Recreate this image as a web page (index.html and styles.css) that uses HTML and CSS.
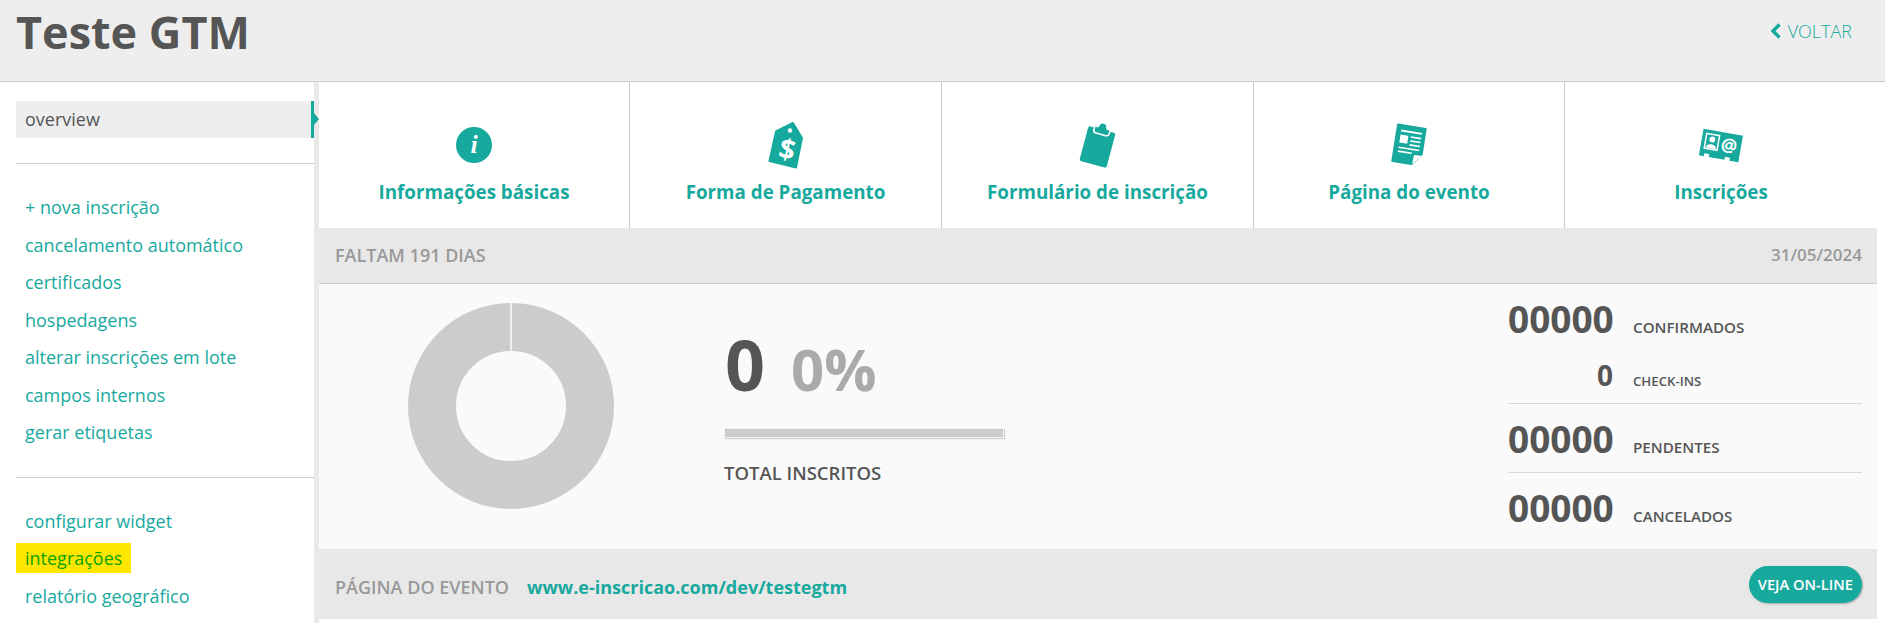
FILE: index.html
```html
<!DOCTYPE html>
<html lang="pt-br">
<head>
  <meta charset="UTF-8">
  <meta name="viewport" content="width=device-width, initial-scale=1.0">
  <title>Teste GTM</title>
  <link rel="stylesheet" href="styles.css">
</head>
<body>

<header class="top">
  <h1>Teste GTM</h1>
  <a class="back" href="#">
    <svg width="12" height="16" viewBox="0 0 12 16"><path d="M9.5 1.5 3 8l6.500 6.500" fill="none" stroke="#17a99e" stroke-width="3.400"/></svg>
    VOLTAR
  </a>
</header>

<div class="layout">
  <aside class="sidebar">
    <div class="current">overview</div>
    <hr>
    <nav class="links">
      <a href="#">+ nova inscrição</a>
      <a href="#">cancelamento automático</a>
      <a href="#">certificados</a>
      <a href="#">hospedagens</a>
      <a href="#">alterar inscrições em lote</a>
      <a href="#">campos internos</a>
      <a href="#">gerar etiquetas</a>
    </nav>
    <hr>
    <nav class="links">
      <a href="#">configurar widget</a>
      <a href="#"><span class="marked">integrações</span></a>
      <a href="#">relatório geográfico</a>
    </nav>
  </aside>

  <main class="content">
    <div class="tabs">
      <a class="tab" href="#">
        <svg class="icon" width="36" height="36" viewBox="0 0 36 36">
          <circle cx="18" cy="18" r="18" fill="#17a99e"/>
          <text x="18" y="26" text-anchor="middle" class="icon-i">i</text>
        </svg>
        <span>Informações básicas</span>
      </a>
      <a class="tab" href="#">
        <svg class="icon" width="36" height="48" viewBox="0 0 36 48">
          <path d="M25 2 8 10.500 1.500 40 28 46.500 34 17Z" fill="#17a99e" stroke="#17a99e" stroke-width="2" stroke-linejoin="round"/>
          <circle cx="22" cy="9.500" r="2.200" fill="#fff"/>
          <text x="0" y="0" transform="translate(17 38) rotate(13)" text-anchor="middle" class="icon-dollar">$</text>
        </svg>
        <span>Forma de Pagamento</span>
      </a>
      <a class="tab" href="#">
        <svg class="icon" width="38" height="46" viewBox="0 0 38 46">
          <g transform="rotate(15 19 23)">
            <rect x="5" y="7" width="28" height="36" rx="2" fill="#17a99e"/>
            <circle cx="19" cy="4.500" r="3.500" fill="#17a99e"/>
            <path d="M11 6v3q0 3 3 3h10q3 0 3-3V6" fill="#17a99e" stroke="#fff" stroke-width="1.500"/>
            <rect x="15" y="4.500" width="8" height="4" fill="#17a99e"/>
          </g>
        </svg>
        <span>Formulário de inscrição</span>
      </a>
      <a class="tab" href="#">
        <svg class="icon" width="38" height="44" viewBox="0 0 38 44">
          <g transform="rotate(9 19 22)">
            <path d="M5 3.500h28v26L24.500 40.500H5Z" fill="#17a99e" stroke="#17a99e" stroke-width="2" stroke-linejoin="round"/>
            <path d="M25 40.500 25.500 31l8-.500Z" fill="#fff"/>
            <path d="M9 8h21v2H9ZM9 13h8v8H9ZM19.500 13H30v1.600H19.500ZM19.500 17H30v1.600H19.500ZM19.500 21H30v1.600H19.500ZM9 25h21v1.600H9ZM9 29h14v1.600H9Z" fill="#fff"/>
          </g>
        </svg>
        <span>Página do evento</span>
      </a>
      <a class="tab" href="#">
        <svg class="icon" width="46" height="38" viewBox="0 0 46 38">
          <g transform="rotate(10 23 19)">
            <path d="M3 6h40v27h-9v-3h-5v3H13v-3H8v3H3Z" fill="#17a99e"/>
            <rect x="7" y="10" width="13" height="15" fill="none" stroke="#fff" stroke-width="1.500"/>
            <circle cx="13.500" cy="15" r="3" fill="#fff"/>
            <path d="M8.500 24q0-4 5-4t5 4Z" fill="#fff"/>
            <text x="31" y="24" text-anchor="middle" class="icon-at">@</text>
          </g>
        </svg>
        <span>Inscrições</span>
      </a>
    </div>

    <div class="bar bar-status">
      <span>FALTAM 191 DIAS</span>
      <span class="date">31/05/2024</span>
    </div>

    <section class="stats">
      <svg class="donut" width="206" height="206" viewBox="0 0 206 206">
        <circle cx="103" cy="103" r="79" fill="none" stroke="#ccc" stroke-width="48"/>
        <path d="M103 0v48" stroke="#fafafa" stroke-width="1.500"/>
      </svg>

      <div class="total">
        <div class="total-numbers"><strong>0</strong><span>0%</span></div>
        <div class="progress"></div>
        <div class="total-label">TOTAL INSCRITOS</div>
      </div>

      <div class="counts">
        <div class="count-group count-group-first">
          <div class="count"><b>00000</b><span>CONFIRMADOS</span></div>
          <div class="count count-small"><b>0</b><span>CHECK-INS</span></div>
        </div>
        <div class="count-group">
          <div class="count"><b>00000</b><span>PENDENTES</span></div>
        </div>
        <div class="count-group">
          <div class="count"><b>00000</b><span>CANCELADOS</span></div>
        </div>
      </div>
    </section>

    <div class="bar bar-page">
      <span class="page-label">PÁGINA DO EVENTO</span>
      <a class="page-link" href="#">www.e-inscricao.com/dev/testegtm</a>
      <a class="online" href="#">VEJA ON-LINE</a>
    </div>
  </main>
</div>

</body>
</html>
```

FILE: styles.css
```css
body {
  font-family: 'Open Sans', sans-serif;
  margin: 0;
  height: 623px;
  overflow: hidden;
  background-color: #fff;
  color: #555;
}

a {
  color: #17a99e;
  text-decoration: none;
}

.top {
  display: flex;
  justify-content: space-between;
  height: 81px;
  background-color: #eee;
  border-bottom: 1px solid #ccc;
  padding: 0 33px 0 16px;
}

.top h1 {
  margin: 3px 0 0;
  font-size: 45px;
  line-height: 58px;
  font-weight: 700;
  color: #555;
}

.back {
  display: flex;
  align-items: center;
  gap: 6px;
  height: 18px;
  margin-top: 22px;
  font-size: 18px;
  font-weight: 300;
}

.layout {
  display: flex;
  height: 541px;
}

.sidebar {
  width: 298px;
  padding: 19px 0 0 16px;
  border-right: 5px solid #e9e9e9;
  flex-shrink: 0;
}

.current {
  position: relative;
  height: 37px;
  line-height: 37px;
  padding-left: 9px;
  background-color: #eee;
  border-right: 3px solid #17a99e;
  font-size: 18px;
}

.current::after {
  content: '';
  position: absolute;
  right: -8px;
  top: 12px;
  border-left: 5px solid #17a99e;
  border-top: 6px solid transparent;
  border-bottom: 6px solid transparent;
}

.sidebar hr {
  height: 1px;
  margin: 0;
  border: 0;
  background-color: #ccc;
}

.current + hr {
  margin-top: 25px;
}

.links {
  padding: 25px 0 25px;
}

.links a {
  display: block;
  height: 37.500px;
  line-height: 37.500px;
  padding-left: 9px;
  font-size: 18px;
}

.marked {
  display: inline-block;
  height: 30px;
  line-height: 30px;
  margin-left: -9px;
  padding: 0 9px;
  background-color: #ffe600;
  color: #0ca300;
}

.content {
  flex: 1;
  margin-right: 8px;
}

.tabs {
  display: grid;
  grid-template-columns: 311px 312px 312px 311px 1fr;
  height: 146px;
}

.tab {
  display: flex;
  flex-direction: column;
  align-items: center;
  padding-top: 38px;
  font-size: 18.800px;
  line-height: 24px;
  font-weight: 700;
  border-right: 1px solid #ccc;
}

.tab:last-child {
  border-right: 0;
}

.icon {
  height: 50px;
  margin-bottom: 10px;
}

.icon-i {
  font-family: 'Liberation Serif', serif;
  font-size: 26px;
  font-style: italic;
  font-weight: 700;
  fill: #fff;
}

.icon-dollar {
  font-family: 'Open Sans', sans-serif;
  font-size: 28px;
  font-weight: 700;
  fill: #fff;
}

.icon-at {
  font-family: 'Open Sans', sans-serif;
  font-size: 18px;
  fill: #fff;
}

.bar {
  display: flex;
  align-items: center;
  background-color: #e8e8e8;
  padding: 0 15px 0 16px;
  color: #999;
  font-size: 18px;
  font-weight: 600;
}

.bar-status {
  justify-content: space-between;
  height: 55px;
  border-bottom: 1px solid #ccc;
}

.bar-status span {
  margin-bottom: 2px;
}

.date {
  font-size: 17px;
}

.stats {
  display: flex;
  height: 265px;
  padding-left: 89px;
  background-color: #fafafa;
}

.donut {
  margin-top: 19px;
  flex-shrink: 0;
}

.total {
  margin: 40px 0 0 110px;
}

.total-numbers {
  display: flex;
  align-items: baseline;
  gap: 26px;
  height: 104px;
  padding-left: 1px;
}

.total-numbers strong {
  font-size: 70px;
  line-height: 80px;
  font-weight: 700;
}

.total-numbers span {
  font-size: 58px;
  line-height: 80px;
  font-weight: 700;
  color: #aaa;
}

.progress {
  width: 278px;
  height: 8px;
  background-color: #ccc;
  border: 1px solid #f4f4f4;
  box-shadow: 1px 1px 1px #ccc;
}

.total-label {
  margin-top: 23px;
  font-size: 18.500px;
  line-height: 24px;
  font-weight: 600;
}

.counts {
  width: 354px;
  margin: 10px 15px 0 auto;
}

.count-group {
  padding-bottom: 8px;
  margin-bottom: 10px;
  border-bottom: 1px solid #d9d9d9;
}

.count-group-first {
  padding-bottom: 5px;
}

.count-group:last-child {
  border-bottom: 0;
}

.count {
  display: flex;
  align-items: baseline;
  height: 50px;
  line-height: 50px;
}

.count b {
  width: 105px;
  text-align: right;
  font-size: 37px;
  font-weight: 700;
}

.count span {
  margin-left: 20px;
  font-size: 15.200px;
  font-weight: 600;
}

.count-small {
  height: 46px;
  line-height: 46px;
  margin-top: 8px;
}

.count-small b {
  font-size: 28px;
}

.count-small span {
  font-size: 13.200px;
}

.bar-page {
  height: 70px;
}

.page-label {
  margin-top: 5px;
}

.page-link {
  margin: 5px 0 0 18px;
  font-size: 18px;
  font-weight: 700;
}

.online {
  margin-left: auto;
  padding: 0 9px;
  height: 37px;
  line-height: 37px;
  border-radius: 19px;
  background-color: #17a99e;
  box-shadow: 1px 1px 2px #aaa;
  color: #fff;
  font-size: 14.700px;
  font-weight: 600;
}
```
